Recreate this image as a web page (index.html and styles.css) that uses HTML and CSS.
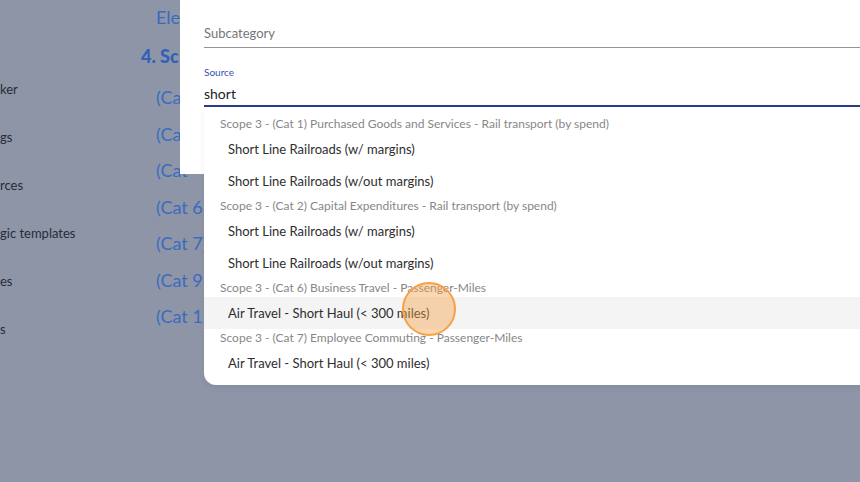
FILE: index.html
```html
<!DOCTYPE html>
<html lang="en">
<head>
    <meta charset="UTF-8">
    <meta name="viewport" content="width=device-width, initial-scale=1.0">
    <title>Emission Source</title>
    <link rel="stylesheet" href="styles.css">
</head>
<body>
    <div class="page">
        <!-- sidebar (cut off by the window) -->
        <ul class="sidebar">
            <li>ker</li>
            <li>gs</li>
            <li>rces</li>
            <li>gic templates</li>
            <li>es</li>
            <li>s</li>
        </ul>

        <div class="main">
            <div class="link first">Ele</div>
            <div class="section-title">4. Sc</div>
            <div class="link">(Ca</div>
            <div class="link">(Ca</div>
            <div class="link">(Cat</div>
            <div class="link">(Cat 6</div>
            <div class="link">(Cat 7)</div>
            <div class="link">(Cat 9</div>
            <div class="link">(Cat 12</div>
        </div>
    </div>

    <div class="dialog">
        <div class="field">
            <div class="field-input placeholder">Subcategory</div>
        </div>
        <div class="field focused">
            <label class="field-label" for="source">Source</label>
            <input class="field-input" id="source" type="text" value="short">
        </div>
    </div>

    <div class="listbox">
        <div class="group">Scope 3 - (Cat 1) Purchased Goods and Services - Rail transport (by spend)</div>
        <div class="option">Short Line Railroads (w/ margins)</div>
        <div class="option">Short Line Railroads (w/out margins)</div>
        <div class="group">Scope 3 - (Cat 2) Capital Expenditures - Rail transport (by spend)</div>
        <div class="option">Short Line Railroads (w/ margins)</div>
        <div class="option">Short Line Railroads (w/out margins)</div>
        <div class="group">Scope 3 - (Cat 6) Business Travel - Passenger-Miles</div>
        <div class="option hover">Air Travel - Short Haul (&lt; 300 miles)</div>
        <div class="group">Scope 3 - (Cat 7) Employee Commuting - Passenger-Miles</div>
        <div class="option">Air Travel - Short Haul (&lt; 300 miles)</div>
    </div>

    <div class="cursor"></div>
</body>
</html>
```

FILE: styles.css
```css
body {
    margin: 0;
    font-family: Lato, "Liberation Sans", sans-serif;
    background-color: #8e95a7;
    height: 482px;
    overflow: hidden;
}
.page {
    display: flex;
}
.sidebar {
    list-style: none;
    margin: 0;
    padding: 80px 0 0 0;
    width: 141px;
    font-size: 13px;
    color: #272c38;
}
.sidebar li {
    height: 48px;
    line-height: 18px;
}
.main {
    padding-top: 6px;
}
.link {
    padding-left: 15px;
    height: 36.5px;
    line-height: 22px;
    font-size: 18px;
    color: #3a6bbf;
}
.link.first {
    height: 39px;
}
.section-title {
    height: 41px;
    line-height: 22px;
    font-size: 18px;
    font-weight: 900;
    color: #2f62b8;
}

/* dialog */
.dialog {
    position: absolute;
    left: 180px;
    top: 0;
    right: 0;
    height: 174px;
    background: #fff;
    padding: 0 0 0 24px;
}
.field {
    border-bottom: 1px solid #949494;
    height: 48px;
    box-sizing: border-box;
}
.field .placeholder {
    padding-top: 25px;
    font-size: 13px;
    color: #767676;
}
.field.focused {
    margin-top: 17px;
    height: 42px;
    border-bottom: 2px solid #2a3c84;
}
.field-label {
    display: block;
    padding-top: 1px;
    font-size: 10px;
    color: #3551b0;
}
input.field-input {
    border: none;
    outline: none;
    padding: 0;
    margin-top: 7px;
    font-family: inherit;
    font-size: 14px;
    color: #222;
    background: transparent;
    width: 100%;
}

/* autocomplete list */
.listbox {
    position: absolute;
    left: 204px;
    top: 108px;
    right: -20px;
    height: 277px;
    box-sizing: border-box;
    padding-top: 7px;
    background: #fff;
    border-radius: 0 0 0 12px;
    box-shadow: 0 3px 6px rgba(0, 0, 0, 0.06);
}
.group {
    height: 18px;
    line-height: 18px;
    padding-left: 16px;
    font-size: 12px;
    color: #878787;
    white-space: nowrap;
}
.option {
    height: 32px;
    line-height: 32px;
    padding-left: 24px;
    font-size: 13px;
    color: #2e2e2e;
}
.option.hover {
    background: #f4f4f4;
}

.cursor {
    position: absolute;
    left: 402px;
    top: 282px;
    width: 50px;
    height: 50px;
    border-radius: 50%;
    border: 2px solid #f5a148;
    background: rgba(245, 160, 70, 0.42);
}
```
